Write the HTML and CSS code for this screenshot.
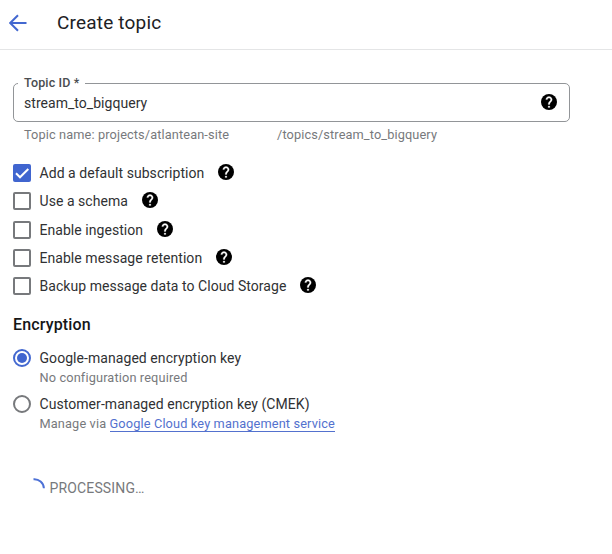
FILE: index.html
```html
<!DOCTYPE html>
<html lang="en">
<head>
<meta charset="utf-8">
<title>Create topic</title>
<link rel="stylesheet" href="styles.css">
</head>
<body>
<svg width="0" height="0" class="defs">
  <symbol id="help" viewBox="2 2 20 20"><circle cx="12" cy="12" r="10" fill="#000"/><path fill="#fff" stroke="#fff" stroke-width=".3" d="M13 19h-2v-2h2v2zm2.070-7.750l-.9.920C13.450 12.900 13 13.500 13 15h-2v-.5c0-1.100.45-2.100 1.170-2.830l1.240-1.260c.37-.36.590-.86.590-1.410 0-1.100-.9-2-2-2s-2 .9-2 2H8c0-2.210 1.790-4 4-4s4 1.790 4 4c0 .88-.36 1.680-.93 2.250z"/></symbol>
</svg>
<header class="header">
  <svg class="back" viewBox="0 0 18 18"><path d="M17.500 9H1.500M9 1.200L1.200 9 9 16.800" fill="none" stroke="#4368d0" stroke-width="2"/></svg>
  <h1>Create topic</h1>
</header>
<main>
  <div class="field">
    <label class="field-label">Topic ID *</label>
    <span class="value">stream_to_bigquery</span>
    <svg class="help"><use href="#help"/></svg>
  </div>
  <p class="hint"><span class="hint-project">Topic name: projects/atlantean-site</span><span>/topics/stream_to_bigquery</span></p>
  <div class="options">
    <div class="option"><span class="box checked"><svg viewBox="0 0 18 18"><path d="M3 9.300l4 4L15.300 5" fill="none" stroke="#fff" stroke-width="2"/></svg></span><span class="text">Add a default subscription</span><svg class="help"><use href="#help"/></svg></div>
    <div class="option"><span class="box"></span><span class="text">Use a schema</span><svg class="help"><use href="#help"/></svg></div>
    <div class="option"><span class="box"></span><span class="text">Enable ingestion</span><svg class="help"><use href="#help"/></svg></div>
    <div class="option"><span class="box"></span><span class="text">Enable message retention</span><svg class="help"><use href="#help"/></svg></div>
    <div class="option"><span class="box"></span><span class="text">Backup message data to Cloud Storage</span><svg class="help"><use href="#help"/></svg></div>
  </div>
  <h2>Encryption</h2>
  <div class="choice">
    <span class="radio on"></span>
    <div><div class="title">Google-managed encryption key</div><div class="sub">No configuration required</div></div>
  </div>
  <div class="choice">
    <span class="radio"></span>
    <div><div class="title">Customer-managed encryption key (CMEK)</div><div class="sub">Manage via <a>Google Cloud key management service</a></div></div>
  </div>
  <div class="status">
    <svg class="spinner" viewBox="0 0 14 20"><path d="M1.500 1.200A9.600 9.600 0 0 1 11.900 10.200" fill="none" stroke="#4d71d6" stroke-width="2"/></svg>
    <span>PROCESSING…</span>
  </div>
</main>
</body>
</html>
```
FILE: styles.css
```css
* { box-sizing: border-box; }
body { margin: 0; background: #fff; color: #303133; font-family: Roboto, sans-serif; font-size: 14px; }
.defs { display: block; }
h1, h2, p { margin: 0; }
.header { display: flex; align-items: center; height: 50px; padding: 0 0 4px 9px; border-bottom: 1px solid #e4e5e6; }
.back { width: 18px; height: 18px; margin-right: 30px; }
h1 { font-size: 19px; line-height: 22px; font-weight: 400; letter-spacing: .18px; color: #202124; }
main { padding: 33px 0 0 13px; }
.help { width: 16px; height: 16px; flex: none; }
.field { position: relative; display: flex; align-items: center; justify-content: space-between; width: 557px; height: 39px; padding: 0 12px 0 10px; border: 1px solid #929598; border-radius: 5px; }
.field .help { margin-top: -1px; }
.field-label { position: absolute; left: 4px; top: -9px; padding: 0 5px 0 6px; background: #fff; font-size: 12.500px; line-height: 16px; font-weight: 500; letter-spacing: .15px; color: #4a4d50; }
.value { letter-spacing: .04px; }
.hint { display: flex; height: 16px; margin-top: 4px; padding-left: 11px; font-size: 12.750px; line-height: 17px; letter-spacing: .12px; color: #77797c; }
.hint-project { width: 253px; }
.options { display: grid; grid-auto-rows: 28.300px; margin-top: 17px; }
.option { display: flex; align-items: center; }
.option .help { margin: -2px 0 0 14px; }
.box { width: 18px; height: 18px; margin-right: 8.500px; border: 2px solid #77797c; border-radius: 2px; }
.box.checked { border: 0; background: #4065cf; }
.box svg { display: block; width: 18px; height: 18px; }
.text { white-space: nowrap; letter-spacing: .05px; }
h2 { margin-top: 15px; font-size: 16px; line-height: 20px; font-weight: 500; letter-spacing: .14px; color: #151617; }
.choice { display: flex; height: 45.500px; }
h2 + .choice { margin-top: 13px; }
.radio { display: grid; place-items: center; width: 18px; height: 18px; margin: 1px 8.500px 0 0; border: 2px solid #77797c; border-radius: 50%; }
.radio.on { border-color: #4368d0; }
.radio.on::after { content: ""; width: 10px; height: 10px; border-radius: 50%; background: #4065cf; }
.title { line-height: 20px; letter-spacing: .06px; white-space: nowrap; }
.sub { font-size: 12.750px; line-height: 19px; letter-spacing: .14px; color: #77797c; white-space: nowrap; }
.sub a { color: #5371ce; border-bottom: 1px solid #5371ce; }
.status { display: flex; align-items: center; height: 20px; margin: 39px 0 0 19px; letter-spacing: .15px; color: #77797c; }
.spinner { width: 14px; height: 20px; margin-right: 3.500px; }
```
